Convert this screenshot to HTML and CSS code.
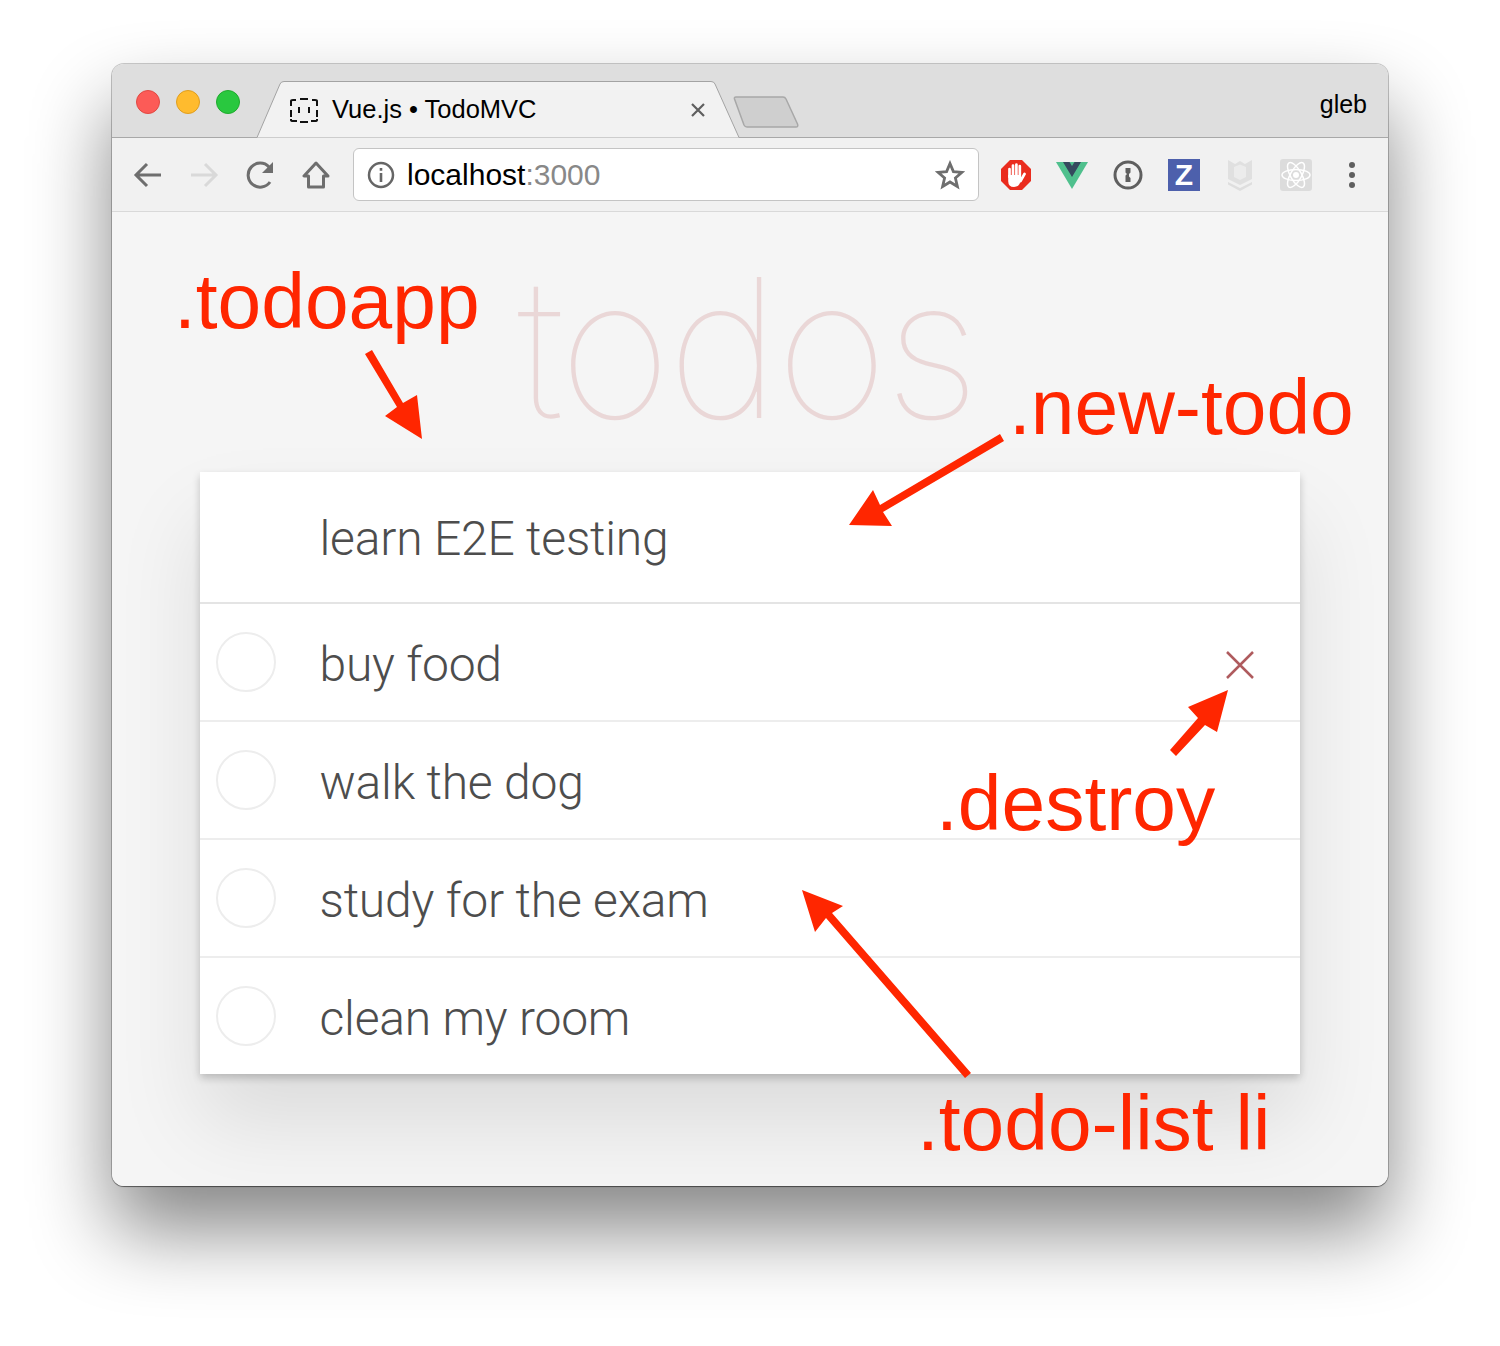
FILE: index.html
```html
<!DOCTYPE html>
<html lang="en">
<head>
    <title>Vue.js • TodoMVC</title>
    <link rel="stylesheet" href="styles.css">
</head>
<body>
    <div class="window">
        <div class="titlebar">
            <div class="lights">
                <span class="light red"></span>
                <span class="light yellow"></span>
                <span class="light green"></span>
            </div>
            <div class="tab">
                <svg class="tab-shape" width="486" height="57" viewBox="0 0 486 57">
                    <path d="M1 56.5 L24 3 Q25 .5 28 .5 L455 .5 Q458 .5 459 3 L483 56.5" fill="#f2f2f2" stroke="#a3a3a3" stroke-width="1"/>
                </svg>
                <svg class="favicon" width="28" height="26" viewBox="0 0 28 26" fill="none" stroke="#111" stroke-width="2">
                    <path d="M1 9V4Q1 3 3 3H6M10 2H18M22 3H25Q27 3 27 4V9M1 13V20M27 13V20M1 22V23Q1 24 3 24H7M10 25H18M21 24H25Q27 24 27 23V22" />
                    <path d="M9 10V16M19 10V16" />
                </svg>
                <span class="tab-title">Vue.js • TodoMVC</span>
                <svg class="tab-close" width="14" height="14" viewBox="0 0 14 14" stroke="#5f5f5f" stroke-width="2.2">
                    <path d="M1 1L13 13M13 1L1 13"/>
                </svg>
            </div>
            <svg class="new-tab" width="66" height="33" viewBox="0 0 66 33">
                <path d="M1.5 3Q1 1 3 1H50Q52 1 53 3L64.500 28Q65.500 31 63 31H14Q12 31 11 29Z" fill="#cfcfcf" stroke="#a8a8a8" stroke-width="1.500"/>
            </svg>
            <span class="profile">gleb</span>
        </div>

        <div class="toolbar">
            <div class="tool">
                <svg width="30" height="28" viewBox="0 0 30 28" fill="none" stroke="#6e6e6e" stroke-width="3">
                    <path d="M28 14H4M14 3L3 14L14 25"/>
                </svg>
            </div>
            <div class="tool">
                <svg width="30" height="28" viewBox="0 0 30 28" fill="none" stroke="#d9d9d9" stroke-width="3">
                    <path d="M2 14H26M16 3L27 14L16 25"/>
                </svg>
            </div>
            <div class="tool">
                <svg class="reload" width="30" height="30" viewBox="0 0 30 30" fill="none" stroke="#6e6e6e" stroke-width="3">
                    <path d="M24 22A12 12 0 1 1 23 7"/>
                    <path d="M27 2V13H16Z" fill="#6e6e6e" stroke="none"/>
                </svg>
            </div>
            <div class="tool">
                <svg width="28" height="28" viewBox="0 0 28 28" fill="none" stroke="#6e6e6e" stroke-width="3" stroke-linejoin="round">
                    <path d="M14 2L2 15H6.500V26H21.500V15H26Z"/>
                </svg>
            </div>
            <div class="address">
                <svg class="info" width="28" height="28" viewBox="0 0 28 28">
                    <circle cx="14" cy="14" r="12" fill="none" stroke="#666" stroke-width="2.500"/>
                    <path d="M12.700 12H15.300V21H12.700ZM12.700 7H15.300V9.800H12.700Z" fill="#666"/>
                </svg>
                <span class="url">localhost<span class="port">:3000</span></span>
                <svg class="star" width="30" height="30" viewBox="0 0 30 30">
                    <path d="M15 3.500L18.400 11.600L27 12.300L20.400 18L22.400 26.500L15 22L7.600 26.500L9.600 18L3 12.300L11.600 11.600Z" fill="none" stroke="#6e6e6e" stroke-width="2.800" stroke-linejoin="miter"/>
                </svg>
            </div>
            <div class="extensions">
                <div class="ext">
                    <svg width="32" height="32" viewBox="0 0 32 32">
                        <path d="M10 1H22L31 10V22L22 31H10L1 22V10Z" fill="#ea2c1e"/>
                        <g stroke="#fff" stroke-width="2.700" stroke-linecap="round">
                            <path d="M9.500 10V18M13 6.500V16M16.400 5.500V16M19.800 7V17M20.500 22L24.500 15"/>
                        </g>
                        <path d="M8.200 16H21V21L19.500 25Q18 28 14 28Q8.200 28 8.200 22Z" fill="#fff"/>
                    </svg>
                </div>
                <div class="ext">
                    <svg width="32" height="28" viewBox="0 0 32 28">
                        <path d="M0 1H32L16 28Z" fill="#4fc08d"/>
                        <path d="M7 1H13.500L16 5L18.500 1H25L16 16Z" fill="#35495e"/>
                    </svg>
                </div>
                <div class="ext">
                    <svg width="30" height="30" viewBox="0 0 30 30">
                        <circle cx="15" cy="15" r="13" fill="none" stroke="#5f5f5f" stroke-width="3"/>
                        <path d="M12.500 8H17.500V12.500L16 14V16.500L17.500 18V22H12.500V15.500L14 14L12.500 12.500Z" fill="#5f5f5f"/>
                    </svg>
                </div>
                <div class="ext">
                    <span class="z-icon">Z</span>
                </div>
                <div class="ext">
                    <svg width="24" height="32" viewBox="0 0 24 32">
                        <path d="M0 1L7 5L12 2L17 5L24 1V20L12 26L0 20Z" fill="#e0e0e0"/>
                        <path d="M6 8L12 5.500L18 8V18L12 21L6 18Z" fill="#ececec"/>
                        <path d="M0 23L12 29L24 23V25.500L12 32L0 25.500Z" fill="#dedede"/>
                    </svg>
                </div>
                <div class="ext">
                    <svg width="32" height="32" viewBox="0 0 32 32">
                        <rect width="32" height="32" rx="3" fill="#dcdcdc"/>
                        <g fill="none" stroke="#fff" stroke-width="1.500">
                            <ellipse cx="16" cy="16" rx="14" ry="5.500"/>
                            <ellipse cx="16" cy="16" rx="14" ry="5.500" transform="rotate(60 16 16)"/>
                            <ellipse cx="16" cy="16" rx="14" ry="5.500" transform="rotate(120 16 16)"/>
                        </g>
                        <circle cx="16" cy="16" r="3" fill="#fff"/>
                    </svg>
                </div>
                <div class="ext">
                    <svg width="8" height="28" viewBox="0 0 8 28" fill="#5f5f5f">
                        <circle cx="4" cy="4" r="3"/>
                        <circle cx="4" cy="14" r="3"/>
                        <circle cx="4" cy="24" r="3"/>
                    </svg>
                </div>
            </div>
        </div>

        <div class="page">
            <section class="todoapp">
                <h1 class="app-title">todos</h1>
                <div class="card">
                    <div class="new-todo">learn E2E testing</div>
                    <ul class="todo-list">
                        <li><span class="toggle"></span><span class="todo-text">buy food</span>
                            <svg class="destroy" width="28" height="28" viewBox="0 0 28 28" stroke="#af5b5e" stroke-width="2.500"><path d="M1 1L27 27M27 1L1 27"/></svg>
                        </li>
                        <li><span class="toggle"></span><span class="todo-text">walk the dog</span></li>
                        <li><span class="toggle"></span><span class="todo-text">study for the exam</span></li>
                        <li><span class="toggle"></span><span class="todo-text">clean my room</span></li>
                    </ul>
                </div>
            </section>
        </div>
    </div>

    <!-- annotations drawn on top of the screenshot -->
    <div class="note note-todoapp">.todoapp</div>
    <div class="note note-new-todo">.new-todo</div>
    <div class="note note-destroy">.destroy</div>
    <div class="note note-list">.todo-list li</div>
    <svg class="arrows" width="1500" height="1346" viewBox="0 0 1500 1346" fill="#ff2600">
        <path d="M365 354L372 350L403 403L417 395L422 439L385 416L397 407Z"/>
        <path d="M1000 434L1004 441L883 512L892 526L849 525L873 490L880 505Z"/>
        <path d="M1170 750L1176 756L1205 725L1217 732L1228 690L1188 707L1198 718Z"/>
        <path d="M971 1073L965 1078L826 918L815 932L802 890L843 906L832 913Z"/>
    </svg>
</body>
</html>
```

FILE: styles.css
```css
body {
    margin: 0;
    padding: 64px 112px 160px;
    background: #fff;
    font-family: "Liberation Sans", Arial, sans-serif;
    overflow: hidden;
}

.window {
    height: 1122px;
    display: flex;
    flex-direction: column;
    border-radius: 12px;
    overflow: hidden;
    box-shadow: 0 0 0 1px rgba(0, 0, 0, 0.2), 0 1px 1px rgba(0, 0, 0, 0.4), 0 44px 80px rgba(0, 0, 0, 0.48);
}

.titlebar {
    height: 74px;
    box-sizing: border-box;
    flex: none;
    display: flex;
    background: #dedede;
    border-bottom: 1px solid #a8a8a8;
    position: relative;
}

.lights {
    display: flex;
    gap: 16px;
    padding: 26px 0 0 24px;
    width: 128px;
    box-sizing: border-box;
    flex: none;
}

.light {
    width: 24px;
    height: 24px;
    border-radius: 50%;
    box-sizing: border-box;
    flex: none;
}

.red { background: #fc5b57; border: 1px solid #e14942; }
.yellow { background: #ffbb2e; border: 1px solid #e09e1e; }
.green { background: #29c83f; border: 1px solid #1fab2d; }

.tab {
    position: relative;
    width: 484px;
    height: 57px;
    margin: 17px 0 0 16px;
    display: flex;
    align-items: center;
    padding-left: 34px;
    box-sizing: border-box;
    flex: none;
}

.tab-shape {
    position: absolute;
    left: 0;
    top: 0;
}

.favicon, .tab-title, .tab-close {
    position: relative;
}

.tab-title {
    margin-left: 14px;
    font-size: 25.5px;
    color: #000;
    white-space: nowrap;
}

.tab-close {
    margin-left: auto;
    margin-right: 35px;
}

.new-tab {
    margin: 32px 0 0 -7px;
    flex: none;
}

.profile {
    margin-left: auto;
    margin-right: 21px;
    padding-top: 26px;
    font-size: 25px;
    color: #000;
}

.toolbar {
    height: 74px;
    box-sizing: border-box;
    flex: none;
    display: flex;
    align-items: center;
    padding-left: 8px;
    background: #f1f1f1;
    border-bottom: 1px solid #d9d9d9;
}

.tool, .ext {
    width: 56px;
    height: 56px;
    flex: none;
    display: flex;
    align-items: center;
    justify-content: center;
}

.reload {
    margin-left: 2px;
}

.address {
    width: 626px;
    height: 53px;
    margin-left: 9px;
    box-sizing: border-box;
    display: flex;
    align-items: center;
    padding: 0 13px;
    background: #fff;
    border: 1px solid #c4c4c4;
    border-radius: 6px;
    flex: none;
}

.url {
    margin-left: 12px;
    font-size: 30px;
    color: #000;
}

.port {
    color: #888;
}

.star {
    margin-left: auto;
}

.extensions {
    display: flex;
    margin-left: 9px;
}

.z-icon {
    width: 32px;
    height: 32px;
    background: #4d60ac;
    color: #fff;
    font-size: 30px;
    font-weight: bold;
    line-height: 32px;
    text-align: center;
}

.page {
    flex: 1;
    background: #f5f5f5;
    display: flex;
    justify-content: center;
    overflow: hidden;
}

.todoapp {
    width: 1100px;
    margin-left: -1px;
}

.app-title {
    margin: 0;
    height: 260px;
    font-family: Inter, sans-serif;
    font-weight: 100;
    font-size: 194px;
    letter-spacing: -4px;
    line-height: 272px;
    text-align: center;
    color: rgba(175, 47, 47, 0.15);
    padding-right: 6px;
}

.card {
    background: #fff;
    box-shadow: 0 4px 8px rgba(0, 0, 0, 0.2), 0 50px 80px rgba(0, 0, 0, 0.1);
}

.new-todo {
    height: 132px;
    box-sizing: border-box;
    padding-left: 120px;
    line-height: 134px;
    font-family: Roboto, sans-serif;
    font-weight: 300;
    font-size: 48px;
    letter-spacing: -0.2px;
    color: #4d4d4d;
    border-bottom: 2px solid #e4e4e4;
}

.todo-list {
    list-style: none;
    margin: 0;
    padding: 0;
}

.todo-list li {
    height: 118px;
    box-sizing: border-box;
    display: flex;
    align-items: center;
    padding: 0 46px 0 16px;
    border-bottom: 2px solid #ededed;
    font-family: Roboto, sans-serif;
    font-weight: 300;
    font-size: 48px;
    letter-spacing: -0.2px;
    color: #4d4d4d;
}

.todo-list li:last-child {
    height: 116px;
    border-bottom: none;
}

.toggle {
    width: 60px;
    height: 60px;
    box-sizing: border-box;
    border: 2px solid #ededed;
    border-radius: 50%;
    flex: none;
}

.todo-text {
    margin: 4px 0 0 44px;
}

.destroy {
    margin: 6px 0 0 auto;
}

.note {
    position: absolute;
    font-size: 78.5px;
    line-height: 90px;
    color: #ff2600;
    white-space: nowrap;
}

.note-todoapp { left: 174px; top: 256px; }
.note-new-todo { left: 1009px; top: 362px; }
.note-destroy { left: 936px; top: 758px; }
.note-list { left: 917px; top: 1078px; }

.arrows {
    position: absolute;
    left: 0;
    top: 0;
    pointer-events: none;
}
```
